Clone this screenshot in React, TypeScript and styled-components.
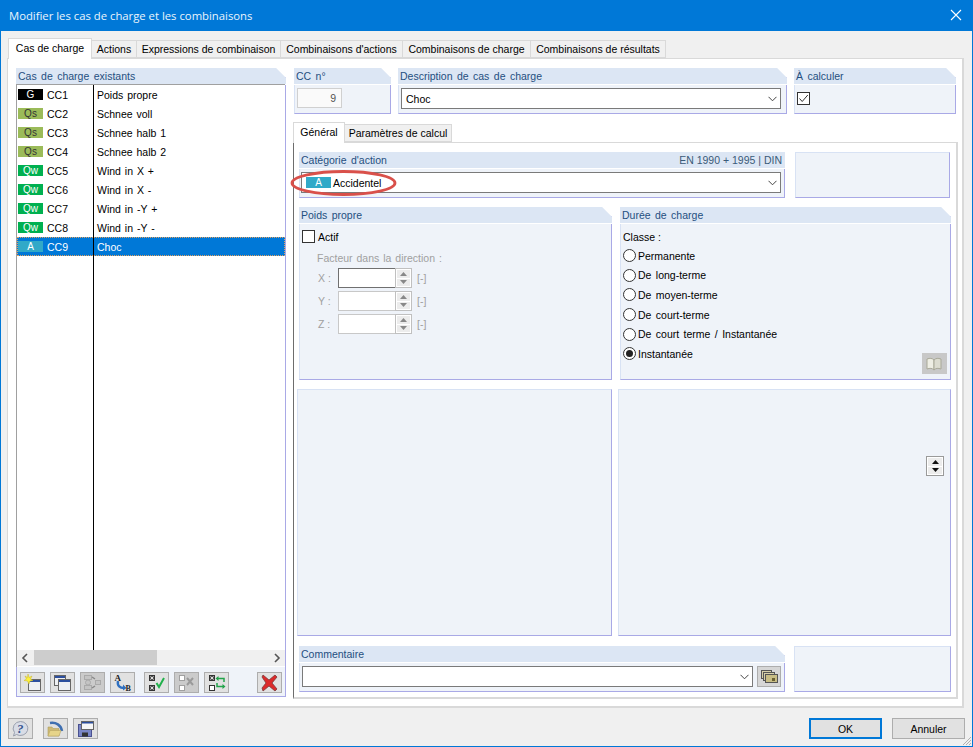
import React from 'react';
import styled, { createGlobalStyle } from 'styled-components';

const GlobalStyle = createGlobalStyle`
  html, body { margin: 0; padding: 0; }
  body {
    font-family: "Liberation Sans", Arial, sans-serif;
    font-size: 10.5px;
    color: #000;
  }
  * { box-sizing: border-box; }
`;

const Window = styled.div`
  position: relative;
  width: 973px;
  height: 747px;
  border: 1px solid #0078d7;
  display: flex;
  flex-direction: column;
  background: #f0f0f0;
  overflow: hidden;
`;

const TitleBar = styled.div`
  height: 30px;
  flex: none;
  background: #0078d7;
  color: #eaf4fc;
  display: flex;
  align-items: center;
  justify-content: space-between;
  padding: 0 10px 2px 8px;
  font-family: "Open Sans", sans-serif;
  font-size: 11.3px;
`;

const TabStrip = styled.div<{ $ml: number; $mt?: number }>`
  display: flex;
  align-items: flex-end;
  height: 20px;
  margin-left: ${p => p.$ml}px;
  margin-top: ${p => p.$mt ?? 0}px;
  position: relative;
  z-index: 1;
`;

const Tab = styled.div<{ $w: number; $active?: boolean }>`
  width: ${p => p.$w}px;
  height: ${p => (p.$active ? 21 : 18)}px;
  margin-bottom: ${p => (p.$active ? -1 : 0)}px;
  padding-bottom: ${p => (p.$active ? 3 : 0)}px;
  flex: none;
  display: flex;
  align-items: center;
  justify-content: center;
  white-space: nowrap;
  background: ${p => (p.$active ? '#fff' : '#f0f0f0')};
  border: 1px solid #d9d9d9;
  border-bottom: ${p => (p.$active ? 'none' : '1px solid #d9d9d9')};
  border-left: ${p => (p.$active ? '1px solid #d9d9d9' : 'none')};
`;

const MainSheet = styled.div`
  width: 957px;
  height: 650px;
  margin-left: 6px;
  background: #fff;
  border: 1px solid #d9d9d9;
  border-width: 1px 2px 2px 1px;
  padding: 9px 0 0 8px;
  display: flex;
  gap: 7px;
`;

const Panel = styled.section<{ $w: number; $h?: number; $flat?: boolean }>`
  width: ${p => p.$w}px;
  height: ${p => p.$h ?? 46}px;
  flex: none;
  display: flex;
  flex-direction: column;
  background: #eff3f9;
  border-left: 1px solid #d8e2f4;
  border-right: 1px solid #a9a9e6;
  border-bottom: 1px solid #a9a9e6;
  clip-path: ${p =>
    p.$flat ? 'none' : 'polygon(0 0, calc(100% - 10px) 0, 100% 10px, 100% 100%, 0 100%)'};
`;

const PanelHeader = styled.header`
  height: 17px;
  flex: none;
  margin: 0 -1px;
  padding: 0 2px 1px 2px;
  display: flex;
  align-items: center;
  justify-content: space-between;
  background: #dce6f4;
  border-bottom: 1px solid #fff;
  color: #1f4f80;
  white-space: pre;
  word-spacing: 1.5px;
`;

const HeaderNote = styled.span`
  color: #3a5a78;
  word-spacing: 0;
  margin-right: 1px;
`;

const EmptyPanel = styled.div<{ $w: number; $h: number }>`
  width: ${p => p.$w}px;
  height: ${p => p.$h}px;
  flex: none;
  background: #eff3f9;
  border: 1px solid #d8e2f4;
  border-right-color: #a9a9e6;
  border-bottom-color: #a9a9e6;
`;

const LeftPanel = styled(Panel)`
  border-left: 1px solid #a9a9e6;
`;

const CaseList = styled.div`
  flex: 1;
  display: flex;
  flex-direction: column;
  background: #fff;
  border-top: 1px solid #a0a0a0;
  border-left: 1px solid #a0a0a0;
  margin: -1px 0 0 -1px;
`;

const CaseRow = styled.div<{ $selected?: boolean }>`
  height: 19px;
  flex: none;
  display: flex;
  align-items: center;
  background: ${p => (p.$selected ? '#0078d7' : 'transparent')};
  color: ${p => (p.$selected ? '#fff' : '#000')};
  outline: ${p => (p.$selected ? '1px dotted #e0a060' : 'none')};
  outline-offset: -1px;
`;

const KeyCell = styled.div`
  width: 77px;
  height: 100%;
  flex: none;
  display: flex;
  align-items: center;
  gap: 4px;
  padding-left: 1px;
  border-right: 1px solid #000;
`;

const DescCell = styled.div`
  padding-left: 3px;
  white-space: nowrap;
  word-spacing: 1px;
`;

const ListFiller = styled.div`
  flex: 1;
  width: 77px;
  border-right: 1px solid #000;
`;

const badgeColors: Record<string, [string, string]> = {
  G: ['#000', '#fff'],
  Qs: ['#9bbb59', '#333'],
  Qw: ['#00b050', '#fff'],
  A: ['#31a9c8', '#fff'],
};

const Badge = styled.span<{ $kind: string }>`
  width: 25px;
  height: 11px;
  flex: none;
  display: flex;
  align-items: center;
  justify-content: center;
  font-size: 10px;
  background: ${p => badgeColors[p.$kind][0]};
  color: ${p => badgeColors[p.$kind][1]};
`;

const HScroll = styled.div`
  height: 16px;
  flex: none;
  display: flex;
  align-items: center;
  background: #f0f0f0;
  margin-bottom: 1px;
  padding: 0 4px;
  justify-content: space-between;
  position: relative;
`;

const ScrollThumb = styled.div`
  position: absolute;
  left: 17px;
  top: 0;
  width: 123px;
  height: 15px;
  background: #cdcdcd;
`;

const ListToolbar = styled.div`
  height: 29px;
  flex: none;
  display: flex;
  align-items: flex-start;
  padding: 5px 0 0 3px;
  background: #eff3f9;
`;

const IconButton = styled.button<{ $disabled?: boolean; $ml?: number }>`
  width: 25px;
  height: 21px;
  flex: none;
  margin: 0 0 0 ${p => p.$ml ?? 0}px;
  padding: 0;
  display: block;
  background: ${p => (p.$disabled ? '#cbcbcb' : '#e1e1e1')};
  border: 1px solid #adadad;
  svg { display: block; }
`;

const RightColumn = styled.div`
  width: 665px;
  flex: none;
  display: flex;
  flex-direction: column;
`;

const TopRow = styled.div`
  display: flex;
  gap: 7px;
  margin: 0 0 8px 1px;
`;

const NumberBox = styled.div`
  width: 45px;
  height: 20px;
  border: 1px solid #d0d0d0;
  background: #fafafa;
  color: #555;
  display: flex;
  align-items: center;
  justify-content: flex-end;
  padding-right: 5px;
`;

const ComboSlot = styled.div<{ $pad: string }>`
  padding: ${p => p.$pad};
  display: flex;
  gap: 4px;
`;

const Combo = styled.div`
  flex: 1;
  height: 21px;
  display: flex;
  align-items: center;
  gap: 2px;
  padding: 0 3px 0 4px;
  background: #fff;
  border: 1px solid #7a7a7a;
  svg:last-child { margin-left: auto; }
`;

const CheckBox = styled.span`
  width: 13px;
  height: 13px;
  flex: none;
  display: block;
  background: #fff;
  border: 1px solid #333;
  svg { display: block; }
`;

const InnerSheet = styled.div`
  height: 557px;
  background: #fff;
  border: 1px solid #d9d9d9;
  border-left-color: #6d6d6d;
  border-width: 1px 2px 2px 1px;
  padding: 9px 0 0 5px;
  display: flex;
  flex-direction: column;
`;

const SheetRow = styled.div<{ $gap: number; $mb?: number; $ml?: number }>`
  display: flex;
  gap: ${p => p.$gap}px;
  margin-bottom: ${p => p.$mb ?? 9}px;
  margin-left: ${p => p.$ml ?? 0}px;
`;

const PanelBody = styled.div`
  flex: 1;
  display: flex;
  flex-direction: column;
  position: relative;
`;

const ActiveRow = styled.label`
  display: flex;
  align-items: center;
  gap: 3px;
  margin: 6px 0 0 2px;
`;

const GroupCaption = styled.div`
  margin: 9px 0 3px 17px;
  line-height: 13px;
  color: #a0a0a0;
  word-spacing: 1px;
`;

const FieldRow = styled.div`
  display: flex;
  align-items: center;
  height: 20px;
  margin: 0 0 3px 18px;
  color: #a0a0a0;
`;

const FieldLabel = styled.span`
  width: 20px;
`;

const FieldInput = styled.div<{ $focus?: boolean }>`
  width: 58px;
  height: 20px;
  background: #fff;
  border: 1px solid ${p => (p.$focus ? '#707070' : '#c8c8c8')};
  border-right-color: #c8c8c8;
`;

const Spinner = styled.div<{ $strong?: boolean }>`
  width: ${p => (p.$strong ? 18 : 17)}px;
  height: 20px;
  flex: none;
  margin-left: ${p => (p.$strong ? 0 : -1)}px;
  padding: 1px;
  display: flex;
  flex-direction: column;
  gap: 1px;
  background: #fff;
  border: 1px solid ${p => (p.$strong ? '#9a9a9a' : '#c0c0c0')};
`;

const SpinCell = styled.div`
  flex: 1;
  display: flex;
  align-items: center;
  justify-content: center;
  background: #ececec;
  svg { display: block; }
`;

const FieldUnit = styled.span`
  margin-left: 5px;
`;

const ClassCaption = styled.div`
  margin: 7px 0 2px 2px;
  line-height: 13px;
`;

const RadioRow = styled.label`
  height: 19.6px;
  display: flex;
  align-items: center;
  gap: 2px;
  margin-left: 2px;
  white-space: pre;
  word-spacing: 1.5px;
`;

const RadioDot = styled.span<{ $on?: boolean }>`
  width: 13px;
  height: 13px;
  flex: none;
  display: flex;
  align-items: center;
  justify-content: center;
  border: 1px solid #333;
  border-radius: 50%;
  background: #fff;
  &::after {
    content: '';
    width: 7px;
    height: 7px;
    border-radius: 50%;
    background: ${p => (p.$on ? '#222' : 'transparent')};
  }
`;

const BookButton = styled(IconButton)`
  position: absolute;
  right: 3px;
  bottom: 5px;
  background: #c8c8c8;
  border-color: #c8c8c8;
`;

const SpinnerPanel = styled(EmptyPanel)`
  display: flex;
  justify-content: flex-end;
  padding: 66px 6px 0 0;
`;

const CommentButton = styled(IconButton)`
  width: 24px;
  background: #d6d6d6;
`;

const Footer = styled.footer`
  flex: 1;
  display: flex;
  align-items: flex-start;
  padding: 10px 7px 0 7px;
`;

const FooterGroup = styled.div<{ $ml?: string; $gap?: number }>`
  display: flex;
  gap: ${p => p.$gap ?? 5}px;
  margin-left: ${p => p.$ml ?? '0'};
`;

const DialogButton = styled.button<{ $default?: boolean }>`
  width: 73px;
  height: 21px;
  padding: 0;
  font: inherit;
  color: #000;
  background: #e1e1e1;
  border: ${p => (p.$default ? '2px solid #0078d7' : '1px solid #adadad')};
`;

const Annotation = styled.svg`
  position: absolute;
  left: 288px;
  top: 168px;
  pointer-events: none;
  z-index: 2;
`;

const Grip = styled.svg`
  position: absolute;
  right: 0;
  bottom: 0;
`;

const cases = [
  ['G', 'CC1', 'Poids propre'],
  ['Qs', 'CC2', 'Schnee voll'],
  ['Qs', 'CC3', 'Schnee halb 1'],
  ['Qs', 'CC4', 'Schnee halb 2'],
  ['Qw', 'CC5', 'Wind in X +'],
  ['Qw', 'CC6', 'Wind in X -'],
  ['Qw', 'CC7', 'Wind in -Y +'],
  ['Qw', 'CC8', 'Wind in -Y -'],
  ['A', 'CC9', 'Choc'],
];

const durations = [
  'Permanente',
  'De long-terme',
  'De moyen-terme',
  'De court-terme',
  'De court terme / Instantanée',
  'Instantanée',
];

function Chevron() {
  return (
    <svg width="9" height="6" viewBox="0 0 9 6">
      <path d="M.5 .8 4.5 4.8 8.5 .8" fill="none" stroke="#444" />
    </svg>
  );
}

function SpinArrows({ color = '#888' }: { color?: string }) {
  return (
    <>
      <SpinCell>
        <svg width="7" height="4" viewBox="0 0 7 4">
          <path d="M3.5 0 7 4H0z" fill={color} />
        </svg>
      </SpinCell>
      <SpinCell>
        <svg width="7" height="4" viewBox="0 0 7 4">
          <path d="M0 0h7L3.5 4z" fill={color} />
        </svg>
      </SpinCell>
    </>
  );
}

function Icon({ children }: { children: React.ReactNode }) {
  return (
    <svg width="23" height="19" viewBox="0 0 23 19">
      {children}
    </svg>
  );
}

function Win({ x, y, w, h }: { x: number; y: number; w: number; h: number }) {
  return (
    <g>
      <rect x={x + 0.5} y={y + 0.5} width={w} height={h} fill="#eef0f4" stroke="#666" />
      <rect x={x + 1} y={y + 1} width={w - 1} height="2" fill="#2c4f9e" />
    </g>
  );
}

function Box({ x, y, on, color = '#333' }: { x: number; y: number; on?: boolean; color?: string }) {
  return (
    <g>
      <rect x={x + 0.5} y={y + 0.5} width="5" height="5" fill={on ? '#555' : '#fff'} stroke={color} />
      {on && <path d={`M${x + 1.5} ${y + 1.5}l3 3m0-3l-3 3`} stroke="#ddd" />}
    </g>
  );
}

function NewIcon() {
  return (
    <Icon>
      <Win x={7} y={6} w={12} h={11} />
      <path
        d="M7 1 8 4.5 11 3 9.5 6 12 7.5 9 8 8 11 6.5 8 3 7.5 5.5 6 4 3 6.5 4.5z"
        fill="#fdf03a"
        stroke="#c9b52a"
        strokeWidth=".5"
      />
    </Icon>
  );
}

function CopyIcon() {
  return (
    <Icon>
      <Win x={3} y={2} w={11} h={10} />
      <Win x={7} y={6} w={12} h={11} />
    </Icon>
  );
}

function GraphIcon() {
  return (
    <Icon>
      <g fill="#c4c4c4" stroke="#aaa">
        <rect x="3.5" y="2.5" width="7" height="4" />
        <rect x="3.5" y="12.5" width="7" height="4" />
        <circle cx="7" cy="9.5" r="2.5" />
        <rect x="14.5" y="7.5" width="5" height="4" />
      </g>
      <path d="M11 4l3 2M11 15l3-2" stroke="#888" strokeWidth="1.5" />
    </Icon>
  );
}

function RenameIcon() {
  return (
    <Icon>
      <path d="M7 8c-1 5 2 7 6 7" fill="none" stroke="#2f6fc0" strokeWidth="2.4" />
      <path d="M12 11.5l3.5 3.5-3.5 2.5z" fill="#2f6fc0" />
      <text x="3.5" y="8" fontFamily="Liberation Serif" fontWeight="700" fontSize="9" fill="#222">A</text>
      <text x="14.5" y="17.5" fontFamily="Liberation Serif" fontWeight="700" fontSize="8" fill="#222">B</text>
    </Icon>
  );
}

function CheckAllIcon() {
  return (
    <Icon>
      <Box x={4} y={2} on />
      <Box x={4} y={12} on />
      <path d="M11.5 10l2.500 4 5-9" fill="none" stroke="#22b14c" strokeWidth="2" />
    </Icon>
  );
}

function UncheckAllIcon() {
  return (
    <Icon>
      <Box x={4} y={2} color="#a0a0a0" />
      <Box x={4} y={12} color="#a0a0a0" />
      <path d="M12 5l6 7m0-7l-6 7" stroke="#9a9a9a" strokeWidth="2" />
    </Icon>
  );
}

function ToggleIcon() {
  return (
    <Icon>
      <Box x={4} y={2} on />
      <Box x={4} y={12} />
      <g fill="none" stroke="#22a34a" strokeWidth="1.5">
        <path d="M19 9V5.5h-6" />
        <path d="M12 10v3.5h6" />
      </g>
      <path d="M13.5 3 10.5 5.5 13.5 8zM17.5 11l3 2.5-3 2.5z" fill="#22a34a" />
    </Icon>
  );
}

function DeleteIcon() {
  return (
    <Icon>
      <path
        d="M5 2 11 7 17 2 19 4 14 10 19 16 17 18 11 13 5 18 4 15 8 10 4 4z"
        fill="#dc2a2a"
        stroke="#7a3a3a"
        strokeWidth=".8"
      />
    </Icon>
  );
}

function HelpIcon() {
  return (
    <Icon>
      <path d="M11.5 2.5a7.500 7 0 1 1-4 13l-3 1.500 1-3.500a7.500 7 0 0 1 6-11z" fill="#d8dce6" stroke="#9aa0ae" />
      <text x="8" y="14" fontFamily="Liberation Serif" fontWeight="700" fontStyle="italic" fontSize="13" fill="#35558f">?</text>
    </Icon>
  );
}

function OpenIcon() {
  return (
    <Icon>
      <path d="M6 4c6-1 11 2 12 8" fill="none" stroke="#3f6fb0" strokeWidth="2.5" />
      <path d="M4 8h4l1 1.5h6V17H4z" fill="#cdb974" stroke="#b0a060" strokeWidth=".6" />
      <path d="M4 17l2-5.5h11l-2 5.5z" fill="#e6d48a" stroke="#b8a664" strokeWidth=".6" />
    </Icon>
  );
}

function SaveIcon() {
  return (
    <Icon>
      <rect x="4.5" y="5.5" width="13" height="12" fill="#7a86c6" stroke="#4a5190" />
      <rect x="8" y="13.5" width="6" height="4" fill="#333" />
      <rect x="7.5" y="2.5" width="12" height="8" fill="#f7f7f7" stroke="#666" />
      <rect x="8" y="3" width="11" height="1.5" fill="#2c4f9e" />
    </Icon>
  );
}

function BookIcon() {
  return (
    <Icon>
      <path d="M4 5c3-1 5-1 7 1v10c-2-2-4-2-7-1z" fill="#eeeee4" stroke="#a8a898" />
      <path d="M18 5c-3-1-5-1-7 1v10c2-2 4-2 7-1z" fill="#dcdcd0" stroke="#a8a898" />
    </Icon>
  );
}

function CommentIcon() {
  return (
    <svg width="22" height="19" viewBox="0 0 22 19">
      <rect x="3.5" y="3.5" width="10" height="8" fill="#d6cfa8" stroke="#555" />
      <rect x="5.5" y="5.5" width="11" height="8" fill="#d6cfa8" stroke="#555" />
      <rect x="7.5" y="7.5" width="12" height="8" fill="#c8bd85" stroke="#555" />
      <rect x="14" y="11" width="3" height="3" fill="#6a6030" />
    </svg>
  );
}

export default function App() {
  return (
    <Window>
      <GlobalStyle />
      <TitleBar>
        <span>Modifier les cas de charge et les combinaisons</span>
        <svg width="12" height="12" viewBox="0 0 12 12">
          <path d="M1 1l10 10M11 1 1 11" stroke="#fff" strokeWidth="1.1" />
        </svg>
      </TitleBar>

      <TabStrip $ml={7} $mt={7}>
        <Tab $w={84} $active>Cas de charge</Tab>
        <Tab $w={45}>Actions</Tab>
        <Tab $w={144}>Expressions de combinaison</Tab>
        <Tab $w={122}>Combinaisons d'actions</Tab>
        <Tab $w={128}>Combinaisons de charge</Tab>
        <Tab $w={135}>Combinaisons de résultats</Tab>
      </TabStrip>

      <MainSheet>
        <LeftPanel $w={270} $h={629}>
          <PanelHeader>Cas de charge existants</PanelHeader>
          <CaseList>
            {cases.map(([kind, code, label]) => (
              <CaseRow key={code} $selected={code === 'CC9'}>
                <KeyCell>
                  <Badge $kind={kind}>{kind}</Badge>
                  {code}
                </KeyCell>
                <DescCell>{label}</DescCell>
              </CaseRow>
            ))}
            <ListFiller />
            <HScroll>
              <ScrollThumb />
              <svg width="8" height="10" viewBox="0 0 8 10">
                <path d="M6 1 2 5l4 4" fill="none" stroke="#555" strokeWidth="1.6" />
              </svg>
              <svg width="8" height="10" viewBox="0 0 8 10">
                <path d="M2 1l4 4-4 4" fill="none" stroke="#555" strokeWidth="1.6" />
              </svg>
            </HScroll>
          </CaseList>
          <ListToolbar>
            <IconButton><NewIcon /></IconButton>
            <IconButton $ml={5}><CopyIcon /></IconButton>
            <IconButton $ml={5} $disabled><GraphIcon /></IconButton>
            <IconButton $ml={5}><RenameIcon /></IconButton>
            <IconButton $ml={9}><CheckAllIcon /></IconButton>
            <IconButton $ml={5} $disabled><UncheckAllIcon /></IconButton>
            <IconButton $ml={5}><ToggleIcon /></IconButton>
            <IconButton $ml={28}><DeleteIcon /></IconButton>
          </ListToolbar>
        </LeftPanel>

        <RightColumn>
          <TopRow>
            <Panel $w={97}>
              <PanelHeader>CC n°</PanelHeader>
              <ComboSlot $pad="3px 0 0 2px">
                <NumberBox>9</NumberBox>
              </ComboSlot>
            </Panel>
            <Panel $w={389}>
              <PanelHeader>Description de cas de charge</PanelHeader>
              <ComboSlot $pad="3px 5px 0 2px">
                <Combo>
                  Choc
                  <Chevron />
                </Combo>
              </ComboSlot>
            </Panel>
            <Panel $w={162}>
              <PanelHeader>À calculer</PanelHeader>
              <ComboSlot $pad="7px 0 0 2px">
                <CheckBox>
                  <svg width="11" height="11" viewBox="0 0 11 11">
                    <path d="M1.5 5.5 4.2 8.5 9.8 2" fill="none" stroke="#333" />
                  </svg>
                </CheckBox>
              </ComboSlot>
            </Panel>
          </TopRow>

          <TabStrip $ml={0}>
            <Tab $w={52} $active>Général</Tab>
            <Tab $w={107}>Paramètres de calcul</Tab>
          </TabStrip>

          <InnerSheet>
            <SheetRow $gap={10}>
              <Panel $w={486} $flat>
                <PanelHeader>
                  Catégorie d'action
                  <HeaderNote>EN 1990 + 1995 | DIN</HeaderNote>
                </PanelHeader>
                <ComboSlot $pad="3px 3px 0 1px">
                  <Combo>
                    <Badge $kind="A">A</Badge>
                    Accidentel
                    <Chevron />
                  </Combo>
                </ComboSlot>
              </Panel>
              <EmptyPanel $w={155} $h={46} />
            </SheetRow>

            <SheetRow $gap={8}>
              <Panel $w={313} $h={173}>
                <PanelHeader>Poids propre</PanelHeader>
                <PanelBody>
                  <ActiveRow>
                    <CheckBox />
                    Actif
                  </ActiveRow>
                  <GroupCaption>Facteur dans la direction :</GroupCaption>
                  {['X', 'Y', 'Z'].map(axis => (
                    <FieldRow key={axis}>
                      <FieldLabel>{axis} :</FieldLabel>
                      <FieldInput $focus={axis === 'X'} />
                      <Spinner>
                        <SpinArrows />
                      </Spinner>
                      <FieldUnit>[-]</FieldUnit>
                    </FieldRow>
                  ))}
                </PanelBody>
              </Panel>
              <Panel $w={331} $h={173}>
                <PanelHeader>Durée de charge</PanelHeader>
                <PanelBody>
                  <ClassCaption>Classe :</ClassCaption>
                  {durations.map(name => (
                    <RadioRow key={name}>
                      <RadioDot $on={name === 'Instantanée'} />
                      {name}
                    </RadioRow>
                  ))}
                  <BookButton><BookIcon /></BookButton>
                </PanelBody>
              </Panel>
            </SheetRow>

            <SheetRow $gap={6} $ml={-2} $mb={10}>
              <EmptyPanel $w={315} $h={247} />
              <SpinnerPanel $w={333} $h={247}>
                <Spinner $strong>
                  <SpinArrows color="#111" />
                </Spinner>
              </SpinnerPanel>
            </SheetRow>

            <SheetRow $gap={9} $mb={0}>
              <Panel $w={486}>
                <PanelHeader>Commentaire</PanelHeader>
                <ComboSlot $pad="3px 3px 0 2px">
                  <Combo>
                    <Chevron />
                  </Combo>
                  <CommentButton><CommentIcon /></CommentButton>
                </ComboSlot>
              </Panel>
              <EmptyPanel $w={157} $h={46} />
            </SheetRow>
          </InnerSheet>
        </RightColumn>
      </MainSheet>

      <Footer>
        <IconButton><HelpIcon /></IconButton>
        <FooterGroup $ml="10px">
          <IconButton><OpenIcon /></IconButton>
          <IconButton><SaveIcon /></IconButton>
        </FooterGroup>
        <FooterGroup $ml="auto" $gap={10}>
          <DialogButton $default>OK</DialogButton>
          <DialogButton>Annuler</DialogButton>
        </FooterGroup>
      </Footer>

      <Annotation width="110" height="30" viewBox="0 0 110 30">
        <ellipse cx="54.5" cy="14" rx="51.5" ry="11.5" fill="none" stroke="#d9504a" strokeWidth="2.8" />
      </Annotation>
      <Grip width="12" height="12" viewBox="0 0 12 12">
        <path d="M11 3 3 11M11 6 6 11M11 9 9 11" stroke="#b0b0b0" />
      </Grip>
    </Window>
  );
}
